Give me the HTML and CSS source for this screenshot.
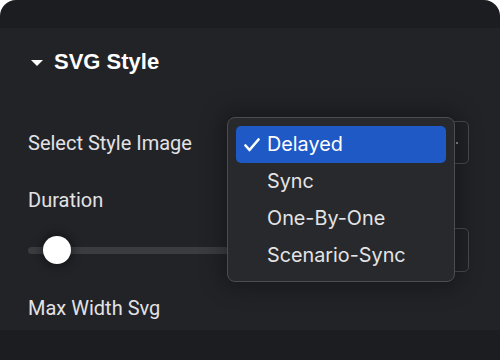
FILE: index.html
```html
<!DOCTYPE html>
<html lang="en">
  <head>
    <meta charset="UTF-8" />
    <meta name="viewport" content="width=device-width, initial-scale=1.0" />
    <title>SVG Style</title>
    <link rel="stylesheet" href="styles.css">
  </head>
  <body>
    <div class="frame">
      <div class="topbar"></div>

      <div class="panel">
        <div class="section-title">
          <span class="caret"></span>
          <h2>SVG Style</h2>
        </div>

        <div class="control-row">
          <label>Select Style Image</label>
          <div class="select-box"><span class="chev"></span></div>
        </div>

        <div class="label-row">
          <label>Duration</label>
        </div>

        <div class="slider-row">
          <div class="slider">
            <div class="track"></div>
            <div class="thumb"></div>
          </div>
          <div class="number-box"></div>
        </div>

        <div class="label-row">
          <label>Max Width Svg</label>
        </div>

        <!-- native select menu, open -->
        <ul class="menu">
          <li class="active">
            <svg class="check" width="16" height="14" viewBox="0 0 16 14">
              <polyline points="1.5,7.5 5.5,12 14.5,1.5" fill="none" stroke="#fff" stroke-width="2.6" stroke-linecap="round" stroke-linejoin="round" />
            </svg>
            Delayed
          </li>
          <li>Sync</li>
          <li>One-By-One</li>
          <li>Scenario-Sync</li>
        </ul>
      </div>

      <div class="bottombar"></div>
    </div>
  </body>
</html>
```

FILE: styles.css
```css
body {
  margin: 0;
  padding: 0;
  background: #ffffff;
  font-family: Roboto, 'Liberation Sans', sans-serif;
}
.frame {
  width: 500px;
  height: 360px;
  border-radius: 16px 16px 0 0;
  overflow: hidden;
  background: #1c1d20;
}
.topbar {
  height: 28px;
}
.bottombar {
  height: 30px;
}
.panel {
  position: relative;
  height: 302px;
  background: #222327;
  padding: 0 31px 0 28px;
  box-sizing: border-box;
}
.section-title {
  display: flex;
  align-items: center;
  height: 26px;
  padding-top: 21px;
}
.caret {
  width: 0;
  height: 0;
  border-left: 6px solid transparent;
  border-right: 6px solid transparent;
  border-top: 6px solid #ffffff;
  margin: 1px 11px 0 3px;
}
.section-title h2 {
  margin: 0;
  font-family: 'Liberation Sans', Arial, sans-serif;
  font-weight: bold;
  font-size: 22px;
  color: #ffffff;
}
label {
  font-size: 20px;
  color: #e2e2e5;
}
.control-row {
  display: flex;
  align-items: center;
  justify-content: space-between;
  height: 45px;
  margin-top: 45px;
}
.select-box {
  width: 228px;
  height: 43px;
  border: 1px solid #4a4b50;
  border-radius: 5px;
  display: flex;
  align-items: center;
  justify-content: flex-end;
  padding-right: 10px;
  box-sizing: border-box;
}
.chev {
  width: 2px;
  height: 2px;
  background: #8a8b90;
}
.label-row {
  display: flex;
  align-items: center;
  height: 24px;
  margin-top: 23px;
}
.slider-row {
  display: flex;
  align-items: center;
  justify-content: space-between;
  height: 44px;
  margin-top: 16px;
}
.slider {
  position: relative;
  flex: 1;
  height: 28px;
  display: flex;
  align-items: center;
  margin-right: 12px;
}
.track {
  width: 100%;
  height: 7px;
  border-radius: 4px;
  background: #3b3c40;
}
.thumb {
  position: absolute;
  left: 15px;
  top: 0;
  width: 28px;
  height: 28px;
  border-radius: 50%;
  background: #ffffff;
  box-shadow: 0 0 8px 3px rgba(0, 0, 0, 0.35);
}
.number-box {
  width: 228px;
  height: 44px;
  border: 1px solid #4a4b50;
  border-radius: 5px;
  box-sizing: border-box;
}
.slider-row + .label-row {
  margin-top: 24px;
}
.menu {
  position: absolute;
  left: 227px;
  top: 89px;
  width: 228px;
  height: 165px;
  margin: 0;
  padding: 8px;
  box-sizing: border-box;
  list-style: none;
  background: #28292c;
  border: 1px solid #4c4d52;
  border-radius: 8px;
  box-shadow: 0 0 22px 6px rgba(0, 0, 0, 0.3);
  font-family: Inter, 'Liberation Sans', sans-serif;
  font-size: 19.8px;
  color: #e4e4e6;
}
.menu li {
  position: relative;
  height: 37px;
  line-height: 37px;
  padding-left: 31px;
  border-radius: 5px;
}
.menu li.active {
  background: #1f59c6;
  color: #ffffff;
}
.check {
  position: absolute;
  left: 8px;
  top: 12px;
}
```
